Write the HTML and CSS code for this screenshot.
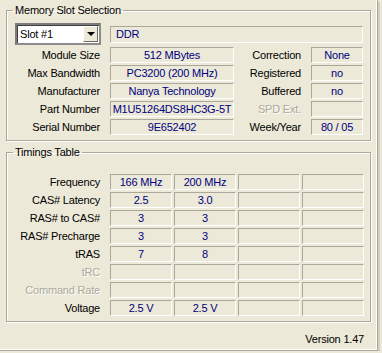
FILE: index.html
```html
<!DOCTYPE html>
<html lang="en">
<head>
    <meta charset="UTF-8">
    <title>SPD</title>
    <link rel="stylesheet" href="styles.css">
</head>
<body>
    <div class="panel">
        <fieldset class="group">
            <legend>Memory Slot Selection</legend>
            <div class="slot-grid">
                <div class="slot-select">
                    <span class="slot-text">Slot #1</span>
                    <span class="drop-btn"><span class="arrow"></span></span>
                </div>
                <div class="field field-wide">DDR</div>

                <div class="label">Module Size</div>
                <div class="field">512 MBytes</div>
                <div class="label">Correction</div>
                <div class="field">None</div>

                <div class="label">Max Bandwidth</div>
                <div class="field">PC3200 (200 MHz)</div>
                <div class="label">Registered</div>
                <div class="field">no</div>

                <div class="label">Manufacturer</div>
                <div class="field">Nanya Technology</div>
                <div class="label">Buffered</div>
                <div class="field">no</div>

                <div class="label">Part Number</div>
                <div class="field">M1U51264DS8HC3G-5T</div>
                <div class="label disabled">SPD Ext.</div>
                <div class="field"></div>

                <div class="label">Serial Number</div>
                <div class="field">9E652402</div>
                <div class="label">Week/Year</div>
                <div class="field">80 / 05</div>
            </div>
        </fieldset>

        <fieldset class="group timings">
            <legend>Timings Table</legend>
            <div class="timing-grid">
                <div class="label">Frequency</div>
                <div class="field">166 MHz</div>
                <div class="field">200 MHz</div>
                <div class="field"></div>
                <div class="field"></div>

                <div class="label">CAS# Latency</div>
                <div class="field">2.5</div>
                <div class="field">3.0</div>
                <div class="field"></div>
                <div class="field"></div>

                <div class="label">RAS# to CAS#</div>
                <div class="field">3</div>
                <div class="field">3</div>
                <div class="field"></div>
                <div class="field"></div>

                <div class="label">RAS# Precharge</div>
                <div class="field">3</div>
                <div class="field">3</div>
                <div class="field"></div>
                <div class="field"></div>

                <div class="label">tRAS</div>
                <div class="field">7</div>
                <div class="field">8</div>
                <div class="field"></div>
                <div class="field"></div>

                <div class="label disabled">tRC</div>
                <div class="field"></div>
                <div class="field"></div>
                <div class="field"></div>
                <div class="field"></div>

                <div class="label disabled">Command Rate</div>
                <div class="field"></div>
                <div class="field"></div>
                <div class="field"></div>
                <div class="field"></div>

                <div class="label">Voltage</div>
                <div class="field">2.5 V</div>
                <div class="field">2.5 V</div>
                <div class="field"></div>
                <div class="field"></div>
            </div>
        </fieldset>

        <div class="version">Version 1.47</div>
    </div>
</body>
</html>
```

FILE: styles.css
```css
body {
    margin: 0;
    background-color: #ece9d8;
    font-family: "Liberation Sans", Arial, sans-serif;
    font-size: 11px;
    letter-spacing: -0.2px;
    color: #000;
}

.panel {
    box-sizing: border-box;
    width: 378px;
    height: 351px;
    padding: 4px 0 0 6px;
    border-right: 1px solid #aca899;
    border-bottom: 1px solid #aca899;
    box-shadow: inset -1px -1px 0 #fff, 2px 2px 0 #d0d0bf;
}

/* group boxes, etched border */
.group {
    box-sizing: border-box;
    width: 365px;
    margin: 0;
    padding: 6px 0 5px 0;
    border: 1px solid #aca899;
    box-shadow: 1px 1px 0 #fff, inset 1px 1px 0 #fff;
    min-inline-size: 0;
}

.group legend {
    margin-left: 6px;
    padding: 0 2px;
    line-height: 13px;
}

.timings {
    margin-top: 5px;
    padding-top: 15px;
}

.label {
    text-align: right;
    line-height: 16px;
    white-space: nowrap;
}

.label.disabled {
    color: #aca899;
    text-shadow: 1px 1px 0 #fff;
}

.field {
    box-sizing: border-box;
    height: 16px;
    line-height: 14px;
    text-align: center;
    color: #000080;
    white-space: nowrap;
    overflow: hidden;
    border: 1px solid;
    border-color: #aca899 #fff #fff #aca899;
}

.slot-grid {
    display: grid;
    grid-template-columns: 93px 124px 57px 52px;
    column-gap: 10px;
    row-gap: 2px;
    align-items: center;
}

.slot-select {
    box-sizing: border-box;
    display: flex;
    align-items: center;
    justify-content: space-between;
    width: 86px;
    height: 22px;
    margin-left: 8px;
    padding: 0 1px 0 3px;
    background-color: #fff;
    border: 2px solid;
    border-color: #7b7b7b #8c8c8c #8c8c8c #7b7b7b;
    box-shadow: inset 1px 1px 0 #404040;
}

.drop-btn {
    box-sizing: border-box;
    display: flex;
    align-items: center;
    justify-content: center;
    width: 15px;
    height: 16px;
    background-color: #ece9d8;
    border: 1px solid;
    border-color: #fff #716f64 #716f64 #fff;
}

.arrow {
    width: 0;
    height: 0;
    border-left: 4px solid transparent;
    border-right: 4px solid transparent;
    border-top: 4px solid #000;
}

.field-wide {
    grid-column: 2 / 5;
    height: 17px;
    text-align: left;
    padding-left: 5px;
}

.timing-grid {
    display: grid;
    grid-template-columns: 101px repeat(4, 62px);
    column-gap: 2px;
    row-gap: 2px;
}

.timing-grid .label {
    padding-right: 8px;
}

.version {
    width: 358px;
    margin-top: 11px;
    text-align: right;
    line-height: 13px;
}
```
